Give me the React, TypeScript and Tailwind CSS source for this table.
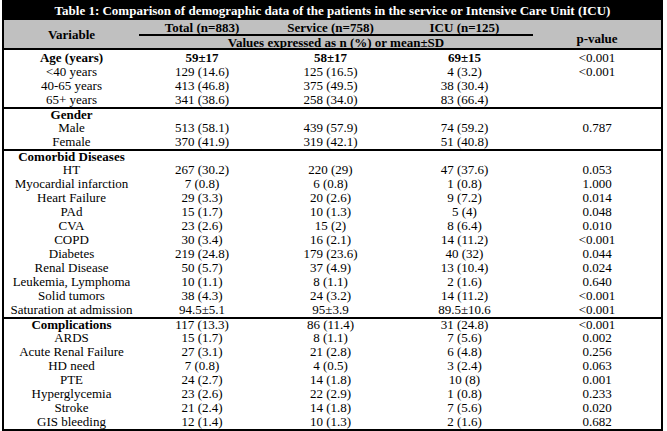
import React from "react";

type Row = { v: string; t: string; s: string; i: string; p: string; bold?: boolean };

const sections: Row[][] = [
  [
    { v: "Age (years)", t: "59±17", s: "58±17", i: "69±15", p: "<0.001", bold: true },
    { v: "<40 years", t: "129 (14.6)", s: "125 (16.5)", i: "4 (3.2)", p: "<0.001" },
    { v: "40-65 years", t: "413 (46.8)", s: "375 (49.5)", i: "38 (30.4)", p: "" },
    { v: "65+ years", t: "341 (38.6)", s: "258 (34.0)", i: "83 (66.4)", p: "" },
  ],
  [
    { v: "Gender", t: "", s: "", i: "", p: "", bold: true },
    { v: "Male", t: "513 (58.1)", s: "439 (57.9)", i: "74 (59.2)", p: "0.787" },
    { v: "Female", t: "370 (41.9)", s: "319 (42.1)", i: "51 (40.8)", p: "" },
  ],
  [
    { v: "Comorbid Diseases", t: "", s: "", i: "", p: "", bold: true },
    { v: "HT", t: "267 (30.2)", s: "220 (29)", i: "47 (37.6)", p: "0.053" },
    { v: "Myocardial infarction", t: "7 (0.8)", s: "6 (0.8)", i: "1 (0.8)", p: "1.000" },
    { v: "Heart Failure", t: "29 (3.3)", s: "20 (2.6)", i: "9 (7.2)", p: "0.014" },
    { v: "PAd", t: "15 (1.7)", s: "10 (1.3)", i: "5 (4)", p: "0.048" },
    { v: "CVA", t: "23 (2.6)", s: "15 (2)", i: "8 (6.4)", p: "0.010" },
    { v: "COPD", t: "30 (3.4)", s: "16 (2.1)", i: "14 (11.2)", p: "<0.001" },
    { v: "Diabetes", t: "219 (24.8)", s: "179 (23.6)", i: "40 (32)", p: "0.044" },
    { v: "Renal Disease", t: "50 (5.7)", s: "37 (4.9)", i: "13 (10.4)", p: "0.024" },
    { v: "Leukemia, Lymphoma", t: "10 (1.1)", s: "8 (1.1)", i: "2 (1.6)", p: "0.640" },
    { v: "Solid tumors", t: "38 (4.3)", s: "24 (3.2)", i: "14 (11.2)", p: "<0.001" },
    { v: "Saturation at admission", t: "94.5±5.1", s: "95±3.9", i: "89.5±10.6", p: "<0.001" },
  ],
  [
    { v: "Complications", t: "117 (13.3)", s: "86 (11.4)", i: "31 (24.8)", p: "<0.001", bold: true },
    { v: "ARDS", t: "15 (1.7)", s: "8 (1.1)", i: "7 (5.6)", p: "0.002" },
    { v: "Acute Renal Failure", t: "27 (3.1)", s: "21 (2.8)", i: "6 (4.8)", p: "0.256" },
    { v: "HD need", t: "7 (0.8)", s: "4 (0.5)", i: "3 (2.4)", p: "0.063" },
    { v: "PTE", t: "24 (2.7)", s: "14 (1.8)", i: "10 (8)", p: "0.001" },
    { v: "Hyperglycemia", t: "23 (2.6)", s: "22 (2.9)", i: "1 (0.8)", p: "0.233" },
    { v: "Stroke", t: "21 (2.4)", s: "14 (1.8)", i: "7 (5.6)", p: "0.020" },
    { v: "GIS bleeding", t: "12 (1.4)", s: "10 (1.3)", i: "2 (1.6)", p: "0.682" },
  ],
];

const cols = "grid grid-cols-[135px_126px_131px_137px_1fr]";

export default function App() {
  return (
    <div className="w-[667px] h-[431px] bg-white pl-[2px] pr-[4px] text-black [font-family:'Liberation_Serif','Times_New_Roman',serif] text-[13px]">
      <div className="h-[20px] bg-black text-white font-bold flex items-center justify-center leading-none">
        Table 1: Comparison of demographic data of the patients in the service or Intensive Care Unit (ICU)
      </div>
      <div className="border-x-2 border-b-2 border-black">
        <div className="bg-[#c0c0c0] h-[30px] border-b-2 border-black grid grid-cols-[135px_394px_1fr] font-bold leading-none">
          <div className="flex items-center justify-center pb-[1px]">Variable</div>
          <div className="flex flex-col">
            <div className="h-[16px] border-b-2 border-black grid grid-cols-[126px_131px_137px]">
              <div className="flex items-center justify-center">Total (n=883)</div>
              <div className="flex items-center justify-center">Service (n=758)</div>
              <div className="flex items-center justify-center">ICU (n=125)</div>
            </div>
            <div className="flex-1 flex items-center justify-center">Values expressed as n (%) or mean±SD</div>
          </div>
          <div className="flex items-center justify-center pt-[8px]">p-value</div>
        </div>
        {sections.map((sec, si) => (
          <div key={si} className={si > 0 ? "border-t-2 border-black" : "pt-[1px]"}>
            {sec.map((r, ri) => (
              <div
                key={ri}
                className={`${cols} ${si > 0 && ri === 0 ? "h-[12px]" : "h-[14px]"} ${si === 3 && ri === 7 ? "h-[12px]" : ""} items-center leading-[12px] text-center ${r.bold && si < 2 ? "font-bold" : ""}`}
              >
                <div className={r.bold ? "font-bold" : ""}>{r.v}</div>
                <div>{r.t}</div>
                <div>{r.s}</div>
                <div>{r.i}</div>
                <div className="font-normal">{r.p}</div>
              </div>
            ))}
          </div>
        ))}
      </div>
    </div>
  );
}
